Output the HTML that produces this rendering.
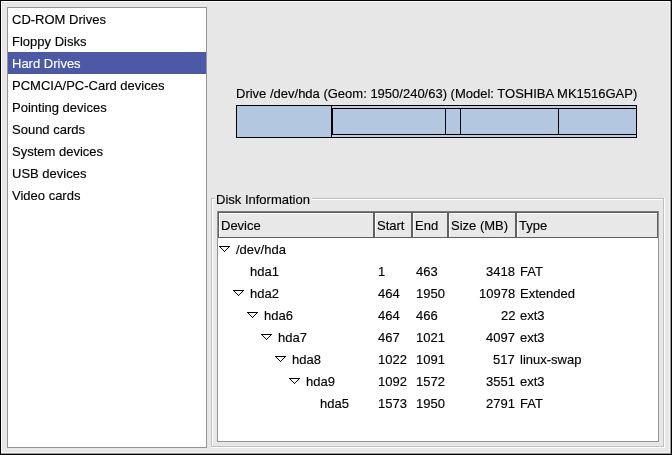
<!DOCTYPE html>
<html><head><meta charset="utf-8"><style>
html,body{margin:0;padding:0;}
body{width:672px;height:455px;overflow:hidden;position:relative;background:#e7e7e7;font-family:"Liberation Sans", sans-serif;font-size:13px;}
body>div,body>span{position:absolute;}
.t{white-space:pre;line-height:15px;-webkit-font-smoothing:antialiased;will-change:transform;-webkit-text-stroke:0.15px currentColor;}
</style></head><body>
<div style="left:0px;top:0px;width:672px;height:1px;background:#000;"></div>
<div style="left:0px;top:454px;width:672px;height:1px;background:#000;"></div>
<div style="left:0px;top:0px;width:1px;height:455px;background:#000;"></div>
<div style="left:671px;top:0px;width:1px;height:455px;background:#000;"></div>
<div style="left:1px;top:1px;width:669px;height:1px;background:#fff;"></div>
<div style="left:1px;top:452px;width:669px;height:1px;background:#f2f2f2;"></div>
<div style="left:1px;top:453px;width:670px;height:1px;background:#9a9a9a;"></div>
<div style="left:1px;top:1px;width:1px;height:452px;background:#fff;"></div>
<div style="left:669px;top:1px;width:1px;height:452px;background:#f4f4f4;"></div>
<div style="left:670px;top:1px;width:1px;height:453px;background:#9a9a9a;"></div>
<div style="left:7px;top:7px;width:200px;height:441px;background:#fff;border:1px solid #959595;box-sizing:border-box"></div>
<div style="left:8px;top:52px;width:198px;height:22px;background:#4b59a6;"></div>
<span class="t" style="left:12px;top:12px;color:#000;">CD-ROM Drives</span>
<span class="t" style="left:12px;top:34px;color:#000;">Floppy Disks</span>
<span class="t" style="left:12px;top:56px;color:#fff;">Hard Drives</span>
<span class="t" style="left:12px;top:78px;color:#000;">PCMCIA/PC-Card devices</span>
<span class="t" style="left:12px;top:100px;color:#000;">Pointing devices</span>
<span class="t" style="left:12px;top:122px;color:#000;">Sound cards</span>
<span class="t" style="left:12px;top:144px;color:#000;">System devices</span>
<span class="t" style="left:12px;top:166px;color:#000;">USB devices</span>
<span class="t" style="left:12px;top:188px;color:#000;">Video cards</span>
<span class="t" style="left:236px;top:86px;color:#000;">Drive /dev/hda (Geom: 1950/240/63) (Model: TOSHIBA MK1516GAP)</span>
<div style="left:236px;top:105px;width:401px;height:33px;background:#b3c7e0;border:1px solid #000;box-sizing:border-box"></div>
<div style="left:332px;top:106px;width:304px;height:31px;background:#bccde4;"></div>
<div style="left:331px;top:105px;width:1px;height:33px;background:#000;"></div>
<div style="left:332px;top:108px;width:305px;height:27px;background:#b3c7e0;border:1px solid #000;box-sizing:border-box"></div>
<div style="left:445px;top:108px;width:1px;height:27px;background:#000;"></div>
<div style="left:460px;top:108px;width:1px;height:27px;background:#000;"></div>
<div style="left:558px;top:108px;width:1px;height:27px;background:#000;"></div>
<div style="left:211px;top:198px;width:453px;height:1px;background:#c0c0c0;"></div>
<div style="left:211px;top:198px;width:1px;height:249px;background:#c0c0c0;"></div>
<div style="left:663px;top:198px;width:1px;height:249px;background:#c0c0c0;"></div>
<div style="left:211px;top:446px;width:453px;height:1px;background:#c0c0c0;"></div>
<div style="left:212px;top:199px;width:451px;height:1px;background:#fff;"></div>
<div style="left:212px;top:199px;width:1px;height:247px;background:#fff;"></div>
<div style="left:664px;top:198px;width:1px;height:250px;background:#fff;"></div>
<div style="left:211px;top:447px;width:454px;height:1px;background:#fff;"></div>
<div style="left:215px;top:190px;width:97px;height:16px;background:#e7e7e7;"></div>
<span class="t" style="left:216px;top:192px;color:#000;">Disk Information</span>
<div style="left:217px;top:211px;width:442px;height:231px;background:#fff;border:1px solid #939393;box-sizing:border-box"></div>
<div style="left:217px;top:211px;width:442px;height:1px;background:#7a7a7a;"></div>
<div style="left:218px;top:212px;width:156px;height:26px;background:#e8e8e8;border:1px solid #5f5f5f;box-sizing:border-box;box-shadow:inset 1px 1px 0 #fff"></div>
<span class="t" style="left:221px;top:218px;color:#000;">Device</span>
<div style="left:374px;top:212px;width:38px;height:26px;background:#e8e8e8;border:1px solid #5f5f5f;box-sizing:border-box;box-shadow:inset 1px 1px 0 #fff"></div>
<span class="t" style="left:377px;top:218px;color:#000;">Start</span>
<div style="left:412px;top:212px;width:36px;height:26px;background:#e8e8e8;border:1px solid #5f5f5f;box-sizing:border-box;box-shadow:inset 1px 1px 0 #fff"></div>
<span class="t" style="left:415px;top:218px;color:#000;">End</span>
<div style="left:448px;top:212px;width:68px;height:26px;background:#e8e8e8;border:1px solid #5f5f5f;box-sizing:border-box;box-shadow:inset 1px 1px 0 #fff"></div>
<span class="t" style="left:451px;top:218px;color:#000;">Size (MB)</span>
<div style="left:516px;top:212px;width:142px;height:26px;background:#e8e8e8;border:1px solid #5f5f5f;box-sizing:border-box;box-shadow:inset 1px 1px 0 #fff"></div>
<span class="t" style="left:519px;top:218px;color:#000;">Type</span>
<div style="left:219px;top:246px;width:11px;height:1px;background:#000;"></div>
<div style="left:220px;top:247px;width:1px;height:1px;background:#000;"></div>
<div style="left:228px;top:247px;width:1px;height:1px;background:#000;"></div>
<div style="left:221px;top:248px;width:1px;height:1px;background:#000;"></div>
<div style="left:227px;top:248px;width:1px;height:1px;background:#000;"></div>
<div style="left:222px;top:249px;width:1px;height:1px;background:#000;"></div>
<div style="left:226px;top:249px;width:1px;height:1px;background:#000;"></div>
<div style="left:223px;top:250px;width:1px;height:1px;background:#000;"></div>
<div style="left:225px;top:250px;width:1px;height:1px;background:#000;"></div>
<div style="left:224px;top:251px;width:1px;height:1px;background:#000;"></div>
<span class="t" style="left:236px;top:242px;color:#000;">/dev/hda</span>
<span class="t" style="left:250px;top:264px;color:#000;">hda1</span>
<span class="t" style="left:378px;top:264px;color:#000;">1</span>
<span class="t" style="left:416px;top:264px;color:#000;">463</span>
<span class="t" style="right:157px;top:264px;color:#000">3418</span>
<span class="t" style="left:520px;top:264px;color:#000;">FAT</span>
<div style="left:233px;top:290px;width:11px;height:1px;background:#000;"></div>
<div style="left:234px;top:291px;width:1px;height:1px;background:#000;"></div>
<div style="left:242px;top:291px;width:1px;height:1px;background:#000;"></div>
<div style="left:235px;top:292px;width:1px;height:1px;background:#000;"></div>
<div style="left:241px;top:292px;width:1px;height:1px;background:#000;"></div>
<div style="left:236px;top:293px;width:1px;height:1px;background:#000;"></div>
<div style="left:240px;top:293px;width:1px;height:1px;background:#000;"></div>
<div style="left:237px;top:294px;width:1px;height:1px;background:#000;"></div>
<div style="left:239px;top:294px;width:1px;height:1px;background:#000;"></div>
<div style="left:238px;top:295px;width:1px;height:1px;background:#000;"></div>
<span class="t" style="left:250px;top:286px;color:#000;">hda2</span>
<span class="t" style="left:378px;top:286px;color:#000;">464</span>
<span class="t" style="left:416px;top:286px;color:#000;">1950</span>
<span class="t" style="right:157px;top:286px;color:#000">10978</span>
<span class="t" style="left:520px;top:286px;color:#000;">Extended</span>
<div style="left:247px;top:312px;width:11px;height:1px;background:#000;"></div>
<div style="left:248px;top:313px;width:1px;height:1px;background:#000;"></div>
<div style="left:256px;top:313px;width:1px;height:1px;background:#000;"></div>
<div style="left:249px;top:314px;width:1px;height:1px;background:#000;"></div>
<div style="left:255px;top:314px;width:1px;height:1px;background:#000;"></div>
<div style="left:250px;top:315px;width:1px;height:1px;background:#000;"></div>
<div style="left:254px;top:315px;width:1px;height:1px;background:#000;"></div>
<div style="left:251px;top:316px;width:1px;height:1px;background:#000;"></div>
<div style="left:253px;top:316px;width:1px;height:1px;background:#000;"></div>
<div style="left:252px;top:317px;width:1px;height:1px;background:#000;"></div>
<span class="t" style="left:264px;top:308px;color:#000;">hda6</span>
<span class="t" style="left:378px;top:308px;color:#000;">464</span>
<span class="t" style="left:416px;top:308px;color:#000;">466</span>
<span class="t" style="right:157px;top:308px;color:#000">22</span>
<span class="t" style="left:520px;top:308px;color:#000;">ext3</span>
<div style="left:261px;top:334px;width:11px;height:1px;background:#000;"></div>
<div style="left:262px;top:335px;width:1px;height:1px;background:#000;"></div>
<div style="left:270px;top:335px;width:1px;height:1px;background:#000;"></div>
<div style="left:263px;top:336px;width:1px;height:1px;background:#000;"></div>
<div style="left:269px;top:336px;width:1px;height:1px;background:#000;"></div>
<div style="left:264px;top:337px;width:1px;height:1px;background:#000;"></div>
<div style="left:268px;top:337px;width:1px;height:1px;background:#000;"></div>
<div style="left:265px;top:338px;width:1px;height:1px;background:#000;"></div>
<div style="left:267px;top:338px;width:1px;height:1px;background:#000;"></div>
<div style="left:266px;top:339px;width:1px;height:1px;background:#000;"></div>
<span class="t" style="left:278px;top:330px;color:#000;">hda7</span>
<span class="t" style="left:378px;top:330px;color:#000;">467</span>
<span class="t" style="left:416px;top:330px;color:#000;">1021</span>
<span class="t" style="right:157px;top:330px;color:#000">4097</span>
<span class="t" style="left:520px;top:330px;color:#000;">ext3</span>
<div style="left:275px;top:356px;width:11px;height:1px;background:#000;"></div>
<div style="left:276px;top:357px;width:1px;height:1px;background:#000;"></div>
<div style="left:284px;top:357px;width:1px;height:1px;background:#000;"></div>
<div style="left:277px;top:358px;width:1px;height:1px;background:#000;"></div>
<div style="left:283px;top:358px;width:1px;height:1px;background:#000;"></div>
<div style="left:278px;top:359px;width:1px;height:1px;background:#000;"></div>
<div style="left:282px;top:359px;width:1px;height:1px;background:#000;"></div>
<div style="left:279px;top:360px;width:1px;height:1px;background:#000;"></div>
<div style="left:281px;top:360px;width:1px;height:1px;background:#000;"></div>
<div style="left:280px;top:361px;width:1px;height:1px;background:#000;"></div>
<span class="t" style="left:292px;top:352px;color:#000;">hda8</span>
<span class="t" style="left:378px;top:352px;color:#000;">1022</span>
<span class="t" style="left:416px;top:352px;color:#000;">1091</span>
<span class="t" style="right:157px;top:352px;color:#000">517</span>
<span class="t" style="left:520px;top:352px;color:#000;">linux-swap</span>
<div style="left:289px;top:378px;width:11px;height:1px;background:#000;"></div>
<div style="left:290px;top:379px;width:1px;height:1px;background:#000;"></div>
<div style="left:298px;top:379px;width:1px;height:1px;background:#000;"></div>
<div style="left:291px;top:380px;width:1px;height:1px;background:#000;"></div>
<div style="left:297px;top:380px;width:1px;height:1px;background:#000;"></div>
<div style="left:292px;top:381px;width:1px;height:1px;background:#000;"></div>
<div style="left:296px;top:381px;width:1px;height:1px;background:#000;"></div>
<div style="left:293px;top:382px;width:1px;height:1px;background:#000;"></div>
<div style="left:295px;top:382px;width:1px;height:1px;background:#000;"></div>
<div style="left:294px;top:383px;width:1px;height:1px;background:#000;"></div>
<span class="t" style="left:306px;top:374px;color:#000;">hda9</span>
<span class="t" style="left:378px;top:374px;color:#000;">1092</span>
<span class="t" style="left:416px;top:374px;color:#000;">1572</span>
<span class="t" style="right:157px;top:374px;color:#000">3551</span>
<span class="t" style="left:520px;top:374px;color:#000;">ext3</span>
<span class="t" style="left:320px;top:396px;color:#000;">hda5</span>
<span class="t" style="left:378px;top:396px;color:#000;">1573</span>
<span class="t" style="left:416px;top:396px;color:#000;">1950</span>
<span class="t" style="right:157px;top:396px;color:#000">2791</span>
<span class="t" style="left:520px;top:396px;color:#000;">FAT</span>
</body></html>
